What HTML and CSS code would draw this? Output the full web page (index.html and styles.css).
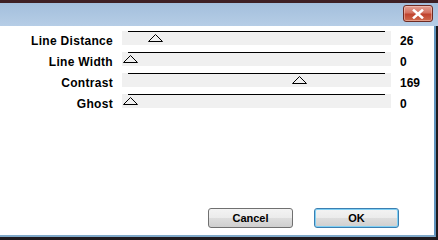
FILE: index.html
```html
<!DOCTYPE html>
<html lang="en">
<head>
    <meta charset="UTF-8">
    <meta name="viewport" content="width=device-width, initial-scale=1.0">
    <title>Line Settings</title>
    <link rel="stylesheet" href="styles.css">
</head>
<body>
    <div class="window">
        <div class="titlebar">
            <button class="close-btn" aria-label="Close">
                <svg width="14" height="10" viewBox="0 0 14 10">
                    <path d="M3 1.5 L11 8.5 M11 1.5 L3 8.5" stroke="#fff" stroke-width="2.6" stroke-linecap="square"/>
                </svg>
            </button>
        </div>
        <div class="content">
            <div class="settings">
                <div class="row">
                    <span class="label">Line Distance</span>
                    <div class="track"><svg class="thumb" style="left: 26px" width="15" height="8" viewBox="0 0 15 8"><path d="M0.5 7.5 L7.5 0.5 L14.5 7.5 Z" fill="none" stroke="#000"/></svg></div>
                    <span class="value">26</span>
                </div>
                <div class="row">
                    <span class="label">Line Width</span>
                    <div class="track"><svg class="thumb" style="left: 1px" width="15" height="8" viewBox="0 0 15 8"><path d="M0.5 7.5 L7.5 0.5 L14.5 7.5 Z" fill="none" stroke="#000"/></svg></div>
                    <span class="value">0</span>
                </div>
                <div class="row">
                    <span class="label">Contrast</span>
                    <div class="track"><svg class="thumb" style="left: 170px" width="15" height="8" viewBox="0 0 15 8"><path d="M0.5 7.5 L7.5 0.5 L14.5 7.5 Z" fill="none" stroke="#000"/></svg></div>
                    <span class="value">169</span>
                </div>
                <div class="row">
                    <span class="label">Ghost</span>
                    <div class="track"><svg class="thumb" style="left: 1px" width="15" height="8" viewBox="0 0 15 8"><path d="M0.5 7.5 L7.5 0.5 L14.5 7.5 Z" fill="none" stroke="#000"/></svg></div>
                    <span class="value">0</span>
                </div>
            </div>
            <div class="buttons">
                <button class="btn">Cancel</button>
                <button class="btn btn-default">OK</button>
            </div>
        </div>
    </div>
</body>
</html>
```

FILE: styles.css
```css
body {
    margin: 0;
    width: 438px;
    height: 240px;
    overflow: hidden;
    background-color: #1f1a1d;
    font-family: "Liberation Sans", Arial, sans-serif;
}
.window {
    display: flex;
    flex-direction: column;
    height: 240px;
}
.titlebar {
    height: 23px;
    border-top: 3px solid #3d2024;
    background: linear-gradient(#a3bfdc, #b6cde6);
    display: flex;
    justify-content: flex-end;
    align-items: flex-start;
    padding-right: 5px;
}
.close-btn {
    margin-top: 2px;
    width: 30px;
    height: 17px;
    padding: 0;
    border: 1px solid #6e2a22;
    border-radius: 3px;
    background: linear-gradient(#e3a195, #d47261 45%, #c0432e 55%, #cf6a4d);
    box-shadow: inset 0 0 0 1px rgba(255, 220, 210, 0.45);
    display: flex;
    align-items: center;
    justify-content: center;
}
.content {
    flex: 1;
    display: flex;
    flex-direction: column;
    justify-content: space-between;
    background-color: #fff;
    margin-right: 2px;
    border-right: 2px solid #5f93bd;
    border-bottom: 2px solid #7fa9c9;
    margin-bottom: 3px;
}
.settings {
    padding-top: 4px;
}
.row {
    display: flex;
    align-items: flex-start;
    height: 21px;
}
.label {
    width: 113px;
    text-align: right;
    font-size: 12px;
    font-weight: bold;
    letter-spacing: 0.3px;
    line-height: 14px;
    padding-top: 4px;
    color: #000;
}
.track {
    position: relative;
    margin-top: 1px;
    margin-left: 9px;
    width: 269px;
    height: 14px;
    background-color: #f0f0f0;
}
.track::before {
    content: "";
    position: absolute;
    top: 0;
    left: 6px;
    right: 6px;
    height: 1px;
    background-color: #000;
}
.thumb {
    position: absolute;
    top: 3px;
}
.value {
    margin-left: 9px;
    font-size: 12px;
    font-weight: bold;
    line-height: 14px;
    padding-top: 4px;
    color: #000;
}
.buttons {
    display: flex;
    justify-content: flex-end;
    gap: 21px;
    padding-right: 35px;
    padding-bottom: 7px;
}
.btn {
    width: 85px;
    height: 20px;
    padding: 0;
    border: 1px solid #707070;
    border-radius: 3px;
    background: linear-gradient(#f3f3f3, #ebebeb 50%, #dddddd 51%, #cfcfcf);
    font-family: "Liberation Sans", Arial, sans-serif;
    font-size: 11px;
    font-weight: bold;
    color: #000;
}
.btn-default {
    border-color: #3c7fb1;
    box-shadow: inset 0 0 0 1px #7fd0f5;
}
```
